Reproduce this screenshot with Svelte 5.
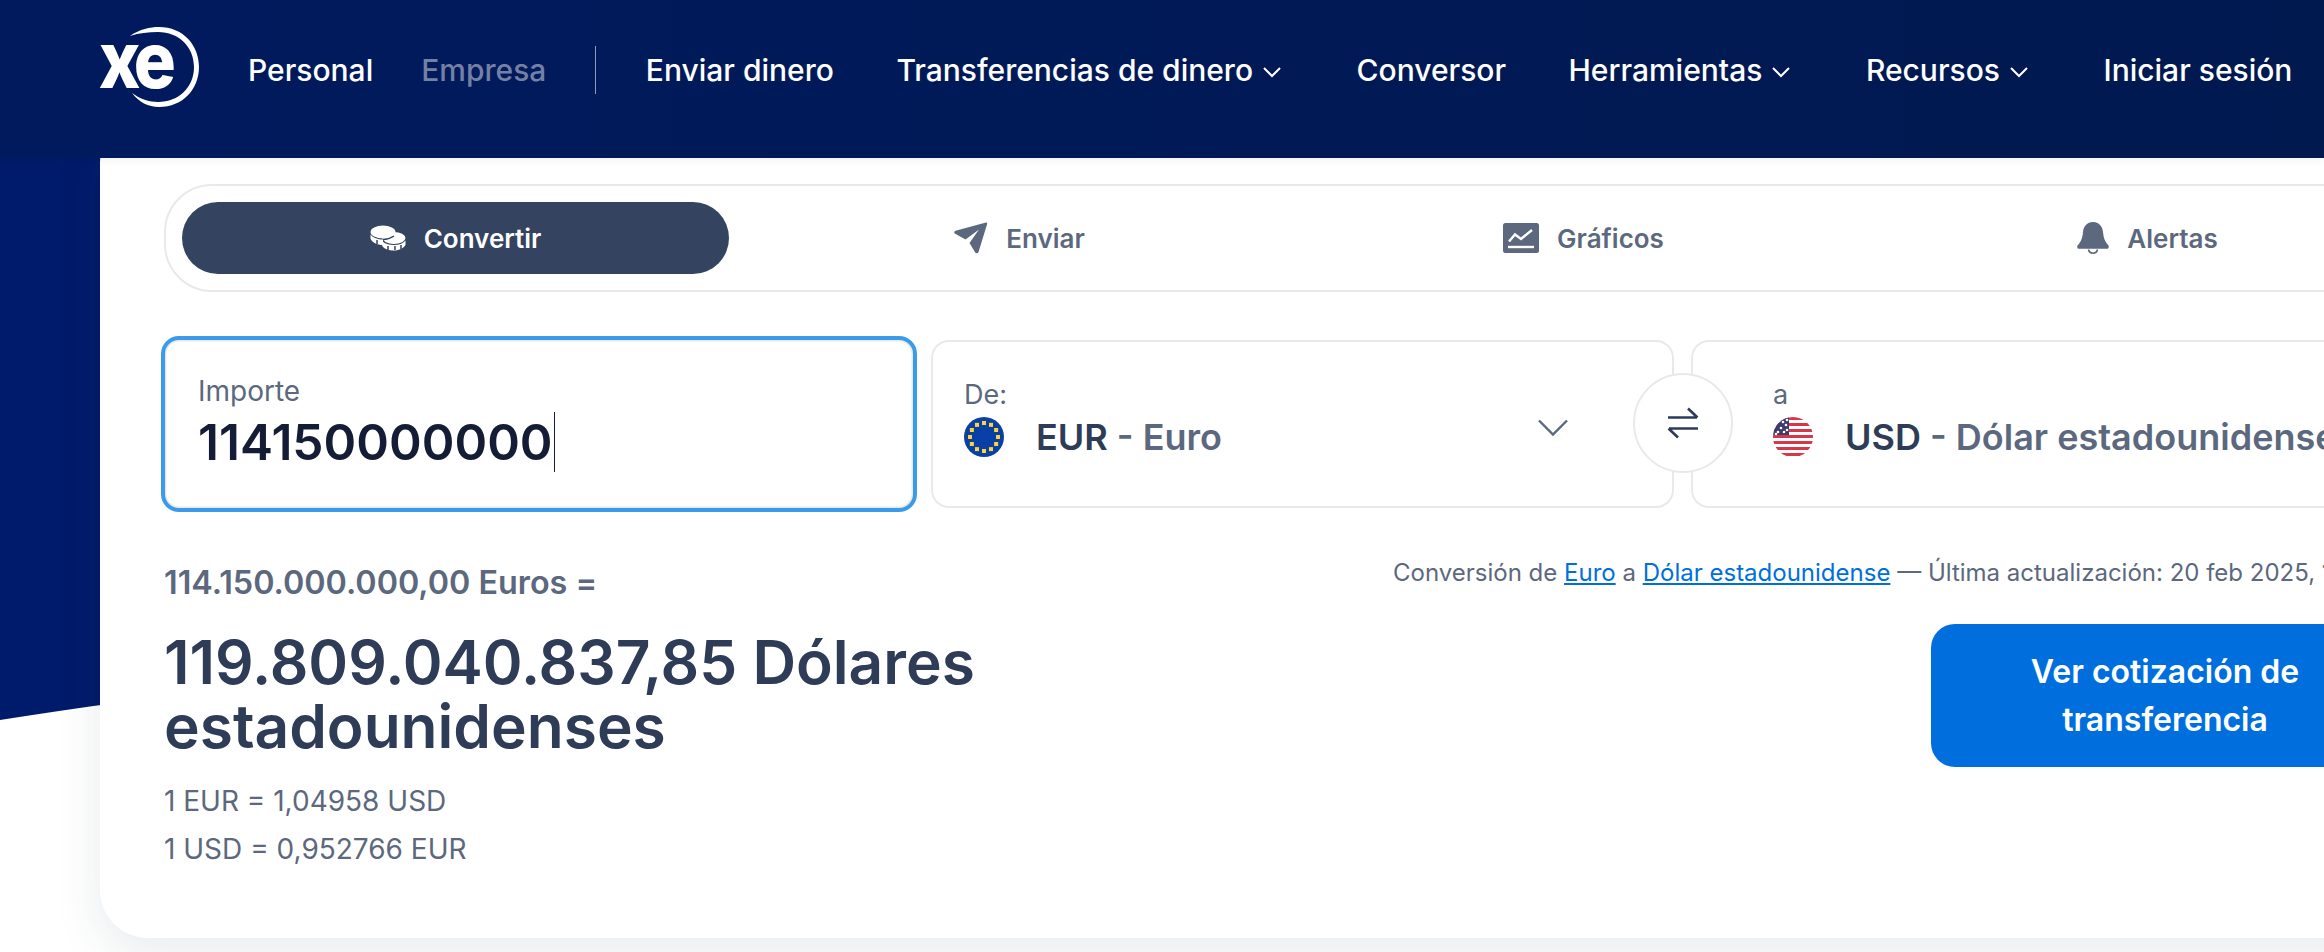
<script>
	const navLinks = [
		{ label: 'Enviar dinero' },
		{ label: 'Transferencias de dinero', caret: true },
		{ label: 'Conversor' },
		{ label: 'Herramientas', caret: true },
		{ label: 'Recursos', caret: true },
		{ label: 'Iniciar sesión' }
	];
	const tabs = ['Convertir', 'Enviar', 'Gráficos', 'Alertas'];
	const stars = Array.from({ length: 12 }, (_, i) => {
		const a = (i * Math.PI) / 6;
		return { x: 20 + 14 * Math.sin(a), y: 20 - 14 * Math.cos(a) };
	});
	const stripes = [0, 1, 2, 3, 4, 5, 6];
</script>

<div class="page">
	<svg class="backdrop" viewBox="0 0 2324 952" preserveAspectRatio="none" aria-hidden="true">
		<path d="M0 0H2324V600C1400 590 500 640 0 720Z" fill="#001b6b" />
	</svg>

	<header class="topbar">
		<svg class="logo" width="108" height="84" viewBox="0 0 108 84" aria-label="xe">
			<text x="3" y="63" class="logo-text" transform="scale(0.9 1)">xe</text>
			<path d="M34 11C44 4 54 2 63 2C87 2 103 20 103 42C103 64 87 82 63 82C52 82 43 77 36 68C44 74 53 77 62 77C83 77 98 62 98 42C98 22 83 7 62 7C52 7 43 8 34 11Z" fill="#fff" />
		</svg>
		<nav class="segments">
			<a href="#personal" class="seg">Personal</a>
			<a href="#empresa" class="seg muted">Empresa</a>
		</nav>
		<span class="divider"></span>
		<nav class="links">
			{#each navLinks as link}
				<a href="#nav" class="seg" class:has-caret={link.caret}>
					{link.label}
					{#if link.caret}
						<svg width="20" height="12" viewBox="0 0 20 12" fill="none" stroke="#fff" stroke-width="2">
							<path d="M2 2l8 8 8-8" />
						</svg>
					{/if}
				</a>
			{/each}
		</nav>
	</header>

	<main class="card">
		<div class="tabs">
			{#each tabs as tab, i}
				<button class="tab" class:active={i === 0}>
					{#if i === 0}
						<svg width="36" height="26" viewBox="0 0 36 26" fill="#fff">
							<ellipse cx="13" cy="7" rx="12.5" ry="6.5" />
							<path d="M0.5 9.5C3 13 8 14.5 13 14.5V20C7 20 2 17.5 0.5 13.5Z" />
							<ellipse cx="24" cy="13" rx="11.5" ry="6" />
							<path d="M12 16C15 19 20 20 24 20C29 20 33 18.5 35.5 15.5V20C33 24 28 25.5 24 25.5C19 25.5 13 24 12 20Z" />
							<path d="M13 14.5C17 14.5 21 13 24 11" stroke="#334360" stroke-width="1.5" fill="none" />
							<path d="M18 21V25M25 21V25M31 20V24M7 15V19" stroke="#334360" stroke-width="1.5" />
						</svg>
					{:else if i === 1}
						<svg width="34" height="32" viewBox="0 0 34 32" fill="#5c687e">
							<path d="M32 0.5C33 0.5 33.5 1.2 33 2.5L24.5 30C24 31.5 22 31.8 21.2 30.5L15.5 21L25 7.5L11.5 17.5L1.2 11.8C-0.2 11 0 9.5 1.5 8.8Z" />
						</svg>
					{:else if i === 2}
						<svg width="36" height="30" viewBox="0 0 36 30">
							<rect width="36" height="30" rx="2.5" fill="#5c687e" />
							<path d="M6 18.5l6-7 6 4.5 11-9" fill="none" stroke="#fff" stroke-width="2.4" />
							<path d="M5 24h26" stroke="#fff" stroke-width="2.4" />
						</svg>
					{:else}
						<svg width="32" height="32" viewBox="0 0 32 32" fill="#5c687e">
							<path d="M16 0C22 0 25.5 4.5 26 10C26.5 16 28 20 31.5 23.5C32.2 25 31.5 26.8 30 26.8H2C0.5 26.8 -0.2 25 0.5 23.5C4 20 5.5 16 6 10C6.5 4.5 10 0 16 0Z" />
							<path d="M11.5 27.5C12 30 13.8 31.2 16 31.2C18.2 31.2 20 30 20.5 27.5" fill="none" stroke="#5c687e" stroke-width="1.6" />
						</svg>
					{/if}
					<span>{tab}</span>
				</button>
			{/each}
		</div>

		<div class="fields">
			<div class="amount">
				<span class="field-label amount-label">Importe</span>
				<div class="amount-value">114150000000<i class="caret"></i></div>
			</div>
			<div class="select from">
				<div class="select-main">
					<span class="field-label">De:</span>
					<div class="currency">
						<svg class="flag" width="40" height="40" viewBox="0 0 40 40">
							<circle cx="20" cy="20" r="20" fill="#0a3fa5" />
							{#each stars as s}
								<rect x={s.x - 2} y={s.y - 2} width="4" height="4" fill="#fcd434" />
							{/each}
						</svg>
						<span class="code">EUR</span><span class="name">&nbsp;- Euro</span>
					</div>
				</div>
				<svg class="chevron" width="30" height="18" viewBox="0 0 30 18" fill="none" stroke="#5c687e" stroke-width="2.4">
					<path d="M1 1.5l14 14 14-14" />
				</svg>
			</div>
			<button class="swap" aria-label="Intercambiar">
				<svg width="32" height="32" viewBox="0 0 32 32" fill="none" stroke="#2e3c57" stroke-width="2.6">
					<path d="M1 10.5h29M21 1.5l9.5 9" />
					<path d="M31 21.5H2M11 30.5l-9.5-9" />
				</svg>
			</button>
			<div class="select to">
				<div class="select-main">
					<span class="field-label">a</span>
					<div class="currency">
						<svg class="flag" width="40" height="40" viewBox="0 0 40 40">
							<defs>
								<clipPath id="us-disc"><circle cx="20" cy="20" r="20" /></clipPath>
							</defs>
							<g clip-path="url(#us-disc)">
								<rect width="40" height="40" fill="#fff" />
								{#each stripes as s}
									<rect y={s * 6} width="40" height="3" fill="#d8374a" />
								{/each}
								<rect width="16" height="18" fill="#3c3b6e" />
								{#each [[5, 15], [8, 11], [11, 15], [13, 8], [10, 5], [3, 17], [14, 13], [14, 3]] as d}
									<circle cx={d[0]} cy={d[1]} r="1.3" fill="#fff" />
								{/each}
							</g>
						</svg>
						<span class="code">USD</span><span class="name">&nbsp;- Dólar estadounidense</span>
					</div>
				</div>
			</div>
		</div>

		<div class="result-row">
			<div class="result">
				<p class="source">114.150.000.000,00 Euros =</p>
				<p class="target">119.809.040.837,85 Dólares estadounidenses</p>
				<div class="rates">
					<p>1 EUR = 1,04958 USD</p>
					<p>1 USD = 0,952766 EUR</p>
				</div>
			</div>
			<div class="aside">
				<p class="updated">Conversión de <a href="#eur">Euro</a> a <a href="#usd">Dólar estadounidense</a> — Última actualización: 20 feb 2025, 13:05 UTC</p>
				<button class="cta">Ver cotización de transferencia</button>
			</div>
		</div>
	</main>
</div>

<style>
	:global(body) {
		margin: 0;
		background: #fff;
		overflow: hidden;
	}
	.page {
		position: relative;
		height: 952px;
		overflow: hidden;
		font-family: Inter, "Liberation Sans", sans-serif;
	}
	.backdrop {
		position: absolute;
		inset: 0;
		width: 100%;
		height: 100%;
	}
	.topbar {
		position: relative;
		z-index: 2;
		box-sizing: border-box;
		height: 158px;
		padding: 0 0 18px 96px;
		display: flex;
		align-items: center;
		width: 2324px;
		background: linear-gradient(90deg, #001a5e 0%, #00194f 100%);
		box-shadow: 0 2px 8px rgba(0, 0, 0, 0.06);
	}
	.logo {
		flex: none;
		margin-right: 44px;
		margin-top: -6px;
	}
	.logo-text {
		font-family: Inter, sans-serif;
		font-size: 78px;
		font-weight: 800;
		letter-spacing: -6px;
		fill: #fff;
	}
	.segments,
	.links {
		display: flex;
		align-items: center;
	}
	.segments {
		gap: 48px;
	}
	.links {
		gap: 62.5px;
	}
	.seg {
		display: flex;
		align-items: center;
		gap: 9px;
		font-size: 30px;
		font-weight: 500;
		line-height: 40px;
		color: #fff;
		text-decoration: none;
		white-space: nowrap;
	}
	.seg.has-caret {
		padding-right: 12px;
	}
	.seg.has-caret svg {
		margin-top: 4px;
	}
	.muted {
		color: #7480a4;
	}
	.divider {
		width: 1.5px;
		height: 48px;
		margin: 0 49.5px 0 48.5px;
		background: #8f99b8;
	}
	.card {
		position: relative;
		z-index: 1;
		box-sizing: border-box;
		width: 2400px;
		margin: -44px 0 0 100px;
		padding: 70px 0 0 64px;
		height: 824px;
		background: #fff;
		border-radius: 48px;
		box-shadow: 0 16px 48px rgba(35, 55, 80, 0.1);
	}
	.tabs {
		box-sizing: border-box;
		width: 2275px;
		height: 108px;
		padding: 16px;
		display: flex;
		gap: 17px;
		border: 2px solid #e9e9ea;
		border-radius: 48px;
	}
	.tab {
		flex: 1;
		height: 72px;
		display: flex;
		align-items: center;
		justify-content: center;
		gap: 18px;
		padding: 0;
		border: none;
		border-radius: 36px;
		background: none;
		font: 600 26px Inter, sans-serif;
		color: #5c687e;
	}
	.tab.active {
		background: #334360;
		color: #fff;
	}
	.fields {
		position: relative;
		width: 2600px;
		margin: 44px 0 0 -3px;
		display: flex;
		align-items: center;
	}
	.amount {
		box-sizing: border-box;
		flex: none;
		width: 756px;
		height: 176px;
		padding: 35px 33px 0;
		margin-right: 14px;
		border: 4px solid #3a9bea;
		border-radius: 18px;
		box-shadow: inset 0 0 0 1.5px #e9e9ea;
	}
	.field-label {
		display: block;
		font-size: 27px;
		line-height: 32px;
		color: #5c687e;
	}
	.amount-label {
		font-size: 28px;
	}
	.amount-value {
		display: flex;
		align-items: center;
		margin-top: 5px;
		font-size: 49.6px;
		font-weight: 600;
		line-height: 60px;
		color: #141d35;
	}
	.caret {
		width: 1.5px;
		height: 60px;
		margin-left: 1px;
		background: #141d35;
	}
	.select {
		box-sizing: border-box;
		flex: none;
		height: 168px;
		display: flex;
		align-items: center;
		border: 2px solid #e9e9ea;
		border-radius: 18px;
	}
	.select-main {
		margin-bottom: 11px;
	}
	.select.from {
		width: 743px;
		padding: 0 104px 0 31px;
		justify-content: space-between;
		margin-right: 17px;
	}
	.select.to {
		width: 1000px;
		padding-left: 80px;
	}
	.currency {
		display: flex;
		align-items: center;
		margin-top: 4px;
		font-size: 36px;
		font-weight: 600;
		line-height: 44px;
		white-space: nowrap;
	}
	.flag {
		margin-right: 32px;
	}
	.code {
		color: #2e3c57;
	}
	.name {
		color: #5c687e;
	}
	.chevron {
		margin-top: 8px;
	}
	.swap {
		position: absolute;
		left: 1472px;
		top: 37px;
		width: 100px;
		height: 100px;
		display: flex;
		align-items: center;
		justify-content: center;
		padding: 0;
		background: #fff;
		border: 2px solid #e9e9ea;
		border-radius: 50%;
	}
	.result-row {
		display: flex;
		margin-top: 48px;
	}
	.result {
		flex: none;
		width: 1230px;
	}
	.source {
		margin: 0;
		font-size: 32.3px;
		font-weight: 600;
		line-height: 45px;
		color: #5c687e;
	}
	.target {
		width: 900px;
		margin: 25px 0 0;
		font-size: 60.4px;
		font-weight: 600;
		line-height: 64px;
		color: #2e3c57;
	}
	.rates {
		margin-top: 19px;
	}
	.rates p {
		margin: 0;
		font-size: 28px;
		line-height: 48px;
		color: #5c687e;
	}
	.aside {
		flex: none;
		width: 1005px;
		display: flex;
		flex-direction: column;
	}
	.updated {
		margin: -5px 0 0 -1px;
		font-size: 24px;
		line-height: 36px;
		color: #5c687e;
		white-space: nowrap;
	}
	.updated a {
		color: #006fdd;
	}
	.cta {
		align-self: flex-end;
		box-sizing: border-box;
		width: 468px;
		height: 143px;
		margin-top: 33px;
		padding: 0 48px;
		border: none;
		border-radius: 24px;
		background: #006fdd;
		color: #fff;
		font: 600 32px/48px Inter, sans-serif;
	}
</style>
